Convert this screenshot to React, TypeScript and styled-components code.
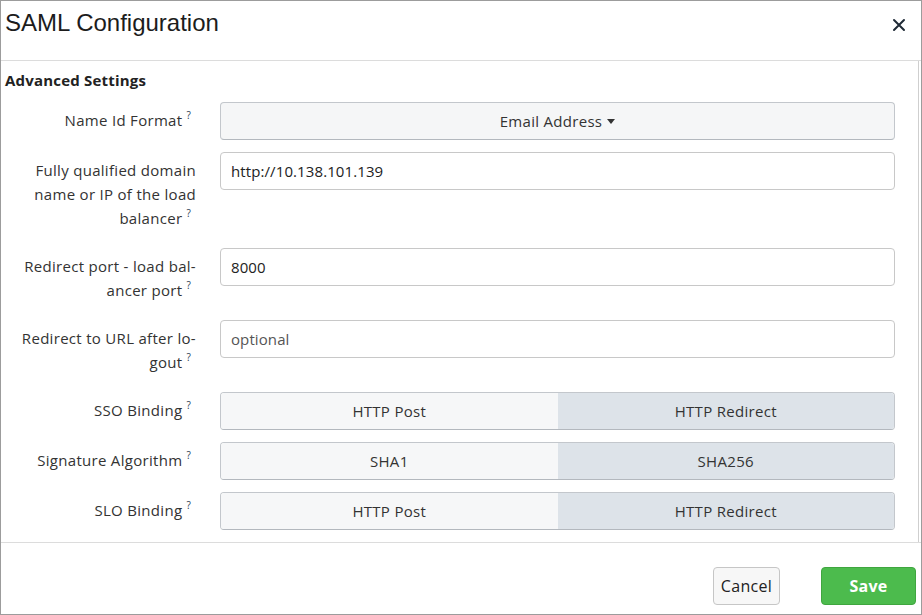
import React from "react";
import styled, { createGlobalStyle } from "styled-components";

const Global = createGlobalStyle`
  html, body { margin: 0; padding: 0; background: #fff; }
  * { box-sizing: border-box; }
  body { font-family: "Open Sans", "Liberation Sans", sans-serif; color: #333; }
`;

const Dialog = styled.div`
  width: 922px;
  height: 615px;
  border: 1px solid #9c9c9c;
  display: flex;
  flex-direction: column;
  background: #fff;
`;

const Header = styled.div`
  height: 60px;
  flex: none;
  border-bottom: 1px solid #dcdcdc;
  display: flex;
  align-items: flex-start;
  justify-content: space-between;
  padding: 6px 14px 0 4px;
`;

const Title = styled.h1`
  margin: 0;
  font-family: "Liberation Sans", Arial, sans-serif;
  font-weight: 400;
  font-size: 24px;
  line-height: 32px;
  color: #1c1c1c;
`;

const Close = styled.button`
  border: none;
  background: none;
  padding: 0;
  margin-top: 10px;
  width: 16px;
  height: 16px;
  display: flex;
  align-items: center;
  justify-content: center;
  cursor: pointer;
`;

const Body = styled.div`
  flex: 1;
  margin-right: 2px;
  border-right: 1px solid #cfcfcf;
  padding: 9px 23px 0 3px;
  overflow: hidden;
`;

const Section = styled.h2`
  margin: 0 0 12px 1px;
  font-size: 15px;
  font-weight: 700;
  line-height: 20px;
  letter-spacing: 0.2px;
  color: #222;
`;

const Row = styled.div`
  display: grid;
  grid-template-columns: 192px 1fr;
  column-gap: 24px;
  margin-bottom: 12px;
  align-items: start;
`;

const Label = styled.div`
  text-align: right;
  font-size: 15px;
  letter-spacing: 0.3px;
  line-height: 24px;
  padding: 6px 0;
  color: #333;
`;

const Help = styled.sup`
  font-size: 10px;
  line-height: 0;
  margin-left: 4px;
  margin-right: 5px;
  color: #2b3d55;
  vertical-align: 7px;
`;

const TextInput = styled.div<{ $placeholder?: boolean }>`
  height: 38px;
  border: 1px solid #c8c8c8;
  border-radius: 4px;
  padding: 0 10px;
  display: flex;
  align-items: center;
  font-size: 15px;
  letter-spacing: 0.1px;
  color: ${(p) => (p.$placeholder ? "#555" : "#222")};
  background: #fff;
`;

const Dropdown = styled.div`
  height: 38px;
  border: 1px solid #c3c7cc;
  border-bottom-color: #b3b8be;
  border-radius: 4px;
  background: #f5f6f7;
  display: flex;
  align-items: center;
  justify-content: center;
  gap: 5px;
  font-size: 15px;
  letter-spacing: 0.3px;
  color: #333;
`;

const Caret = styled.span`
  width: 0;
  height: 0;
  border-left: 4.5px solid transparent;
  border-right: 4.5px solid transparent;
  border-top: 5px solid #333;
  margin-top: 1px;
`;

const Group = styled.div`
  height: 38px;
  border: 1px solid #c3c7cc;
  border-bottom-color: #b3b8be;
  border-radius: 4px;
  display: grid;
  grid-template-columns: 1fr 1fr;
  overflow: hidden;
`;

const Seg = styled.div<{ $active?: boolean }>`
  display: flex;
  align-items: center;
  justify-content: center;
  font-size: 15px;
  letter-spacing: 0.3px;
  color: #333;
  background: ${(p) => (p.$active ? "#dde3e9" : "#f6f7f8")};
`;

const Footer = styled.div`
  height: 72px;
  flex: none;
  border-top: 1px solid #dcdcdc;
  display: flex;
  justify-content: flex-end;
  align-items: flex-start;
  gap: 41px;
  padding: 24px 5px 0 0;
`;

const Button = styled.button<{ $primary?: boolean }>`
  height: 38px;
  border-radius: 4px;
  font-family: "Open Sans", "Liberation Sans", sans-serif;
  font-size: 16px;
  letter-spacing: 0.3px;
  cursor: pointer;
  ${(p) =>
    p.$primary
      ? `width: 95px; background: #4cbb4d; color: #fff; font-weight: 700; border: 1px solid #3fa63f;`
      : `width: 67px; background: #f7f7f7; color: #222; border: 1px solid #c6c6c6;`}
`;

type Field =
  | { kind: "dropdown"; label: string[]; value: string }
  | { kind: "input"; label: string[]; value: string; placeholder?: boolean }
  | { kind: "group"; label: string[]; options: [string, string]; active: number };

const fields: Field[] = [
  { kind: "dropdown", label: ["Name Id Format"], value: "Email Address" },
  {
    kind: "input",
    label: ["Fully qualified domain", "name or IP of the load", "balancer"],
    value: "http://10.138.101.139",
  },
  { kind: "input", label: ["Redirect port - load bal-", "ancer port"], value: "8000" },
  { kind: "input", label: ["Redirect to URL after lo-", "gout"], value: "optional", placeholder: true },
  { kind: "group", label: ["SSO Binding"], options: ["HTTP Post", "HTTP Redirect"], active: 1 },
  { kind: "group", label: ["Signature Algorithm"], options: ["SHA1", "SHA256"], active: 1 },
  { kind: "group", label: ["SLO Binding"], options: ["HTTP Post", "HTTP Redirect"], active: 1 },
];

function FieldLabel({ lines }: { lines: string[] }) {
  return (
    <Label>
      {lines.map((l, i) => (
        <React.Fragment key={i}>
          {l}
          {i < lines.length - 1 ? <br /> : <Help>?</Help>}
        </React.Fragment>
      ))}
    </Label>
  );
}

export default function App() {
  return (
    <>
      <Global />
      <Dialog>
        <Header>
          <Title>SAML Configuration</Title>
          <Close aria-label="Close">
            <svg width="14" height="14" viewBox="0 0 14 14">
              <path d="M2 2 L12 12 M12 2 L2 12" stroke="#1f2a36" strokeWidth="2" strokeLinecap="round" />
            </svg>
          </Close>
        </Header>
        <Body>
          <Section>Advanced Settings</Section>
          {fields.map((f, i) => (
            <Row key={i}>
              <FieldLabel lines={f.label} />
              {f.kind === "dropdown" && (
                <Dropdown>
                  {f.value}
                  <Caret />
                </Dropdown>
              )}
              {f.kind === "input" && <TextInput $placeholder={f.placeholder}>{f.value}</TextInput>}
              {f.kind === "group" && (
                <Group>
                  {f.options.map((o, j) => (
                    <Seg key={j} $active={j === f.active}>
                      {o}
                    </Seg>
                  ))}
                </Group>
              )}
            </Row>
          ))}
        </Body>
        <Footer>
          <Button>Cancel</Button>
          <Button $primary>Save</Button>
        </Footer>
      </Dialog>
    </>
  );
}
